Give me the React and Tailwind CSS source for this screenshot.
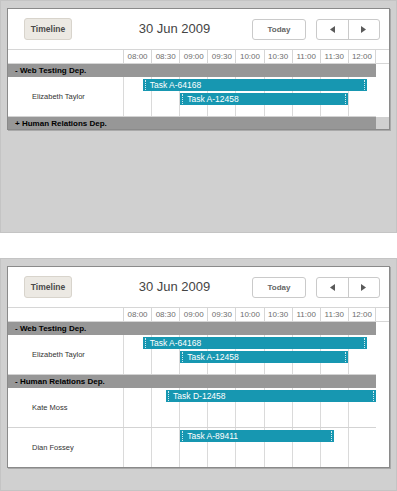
import React from 'react';

const HOURS = ['08:00', '08:30', '09:00', '09:30', '10:00', '10:30', '11:00', '11:30', '12:00'];
const CELL = 253 / 9; // px per 30 min

const Arrow = ({ dir }) => (
  <svg width="5" height="7" viewBox="0 0 5 7">
    <polygon points={dir === 'left' ? '5,0 5,7 0,3.5' : '0,0 0,7 5,3.5'} fill="#5a5a5a" />
  </svg>
);

const TaskBar = ({ task }) => {
  const left = (task.start / 30) * CELL;
  const width = ((task.end - task.start) / 30) * CELL;
  return (
    <div
      className="absolute h-[12px] bg-[#1797b1] text-white text-[8.5px] leading-[12px] pl-[7px] whitespace-nowrap overflow-hidden"
      style={{ left, width, top: task.top }}
    >
      <span className="absolute left-[2px] top-[1px] bottom-[1px] border-l border-dotted border-white/80" />
      {task.label}
      <span className="absolute right-[2px] top-[1px] bottom-[1px] border-l border-dotted border-white/80" />
    </div>
  );
};

const Scheduler = ({ sections, height }) => (
  <div className={`mt-[7px] ml-[6px] w-[383px] border border-[#8a8a8a] bg-white overflow-hidden shadow-[1px_1px_0_#a9a9a9] ${height}`}>
    {/* nav bar */}
    <div className="h-[40px] flex items-start">
      <button className="ml-[16px] mt-[9px] w-[48px] h-[22px] rounded-[3px] border border-[#d8d4cc] bg-[#ece9e3] text-[8.5px] font-bold text-[#4a4a4a]">
        Timeline
      </button>
      <div className="ml-[28px] w-[149px] mt-[12px] text-center text-[13px] leading-[16px] text-[#444]">30 Jun 2009</div>
      <button className="ml-[3px] mt-[10px] w-[54px] h-[21px] rounded-[3px] border border-[#cacaca] bg-white text-[8px] font-bold text-[#666]">
        Today
      </button>
      <div className="ml-[10px] mt-[10px] w-[64px] h-[21px] rounded-[3px] border border-[#cacaca] flex">
        <div className="flex-1 flex items-center justify-center">
          <Arrow dir="left" />
        </div>
        <div className="flex-1 flex items-center justify-center border-l border-[#cacaca]">
          <Arrow dir="right" />
        </div>
      </div>
    </div>

    {/* time scale */}
    <div className="h-[15px] flex border-t border-b border-[#d6d6d6]">
      <div className="w-[115px]" />
      {HOURS.map((h, i) => (
        <div
          key={h}
          className={`w-[28.11px] border-l border-[#d6d6d6] text-center text-[8px] leading-[13px] text-[#6e6e6e] ${i === HOURS.length - 1 ? 'border-r' : ''}`}
        >
          {h}
        </div>
      ))}
    </div>

    {sections.map((sec) => (
      <div key={sec.name}>
        <div className="flex h-[13px]">
          <div className="w-[368px] bg-[#979797] pl-[7px] text-[8px] leading-[13px] font-bold text-black">
            {sec.open ? '-' : '+'} {sec.name}
          </div>
          {sec.gutter && <div className="flex-1 bg-[#d0d0d0]" />}
        </div>
        {sec.open &&
          sec.rows.map((row) => (
            <div key={row.name} className="flex w-[368px] h-[40px] border-b border-[#d3d3d3]">
              <div className="w-[115px] pl-[24px] flex items-center text-[7.5px] text-[#333]">{row.name}</div>
              <div className="relative flex">
                {HOURS.map((h) => (
                  <div key={h} className="w-[28.11px] border-l border-[#dadada]" />
                ))}
                {row.tasks.map((t) => (
                  <TaskBar key={t.label} task={t} />
                ))}
              </div>
            </div>
          ))}
      </div>
    ))}
  </div>
);

const first = [
  {
    name: 'Web Testing Dep.',
    open: true,
    rows: [
      {
        name: 'Elizabeth Taylor',
        tasks: [
          { label: 'Task A-64168', start: 21, end: 260, top: 2 },
          { label: 'Task A-12458', start: 61, end: 240, top: 16 },
        ],
      },
    ],
  },
  { name: 'Human Relations Dep.', open: false, gutter: true, rows: [] },
];

const second = [
  first[0],
  {
    name: 'Human Relations Dep.',
    open: true,
    rows: [
      { name: 'Kate Moss', tasks: [{ label: 'Task D-12458', start: 46, end: 270, top: 2 }] },
      { name: 'Dian Fossey', tasks: [{ label: 'Task A-89411', start: 61, end: 225, top: 2 }] },
    ],
  },
];

export default function App() {
  return (
    <div className="w-[397px] h-[491px] bg-white font-['Liberation_Sans',Arial,sans-serif]">
      <div className="h-[233px] bg-[#d0d0d0] border border-[#c4c4c4] overflow-hidden">
        <Scheduler sections={first} height="h-[122px]" />
      </div>
      <div className="h-[25px]" />
      <div className="h-[233px] bg-[#d0d0d0] border border-[#c4c4c4] overflow-hidden">
        <Scheduler sections={second} height="h-[202px]" />
      </div>
    </div>
  );
}
